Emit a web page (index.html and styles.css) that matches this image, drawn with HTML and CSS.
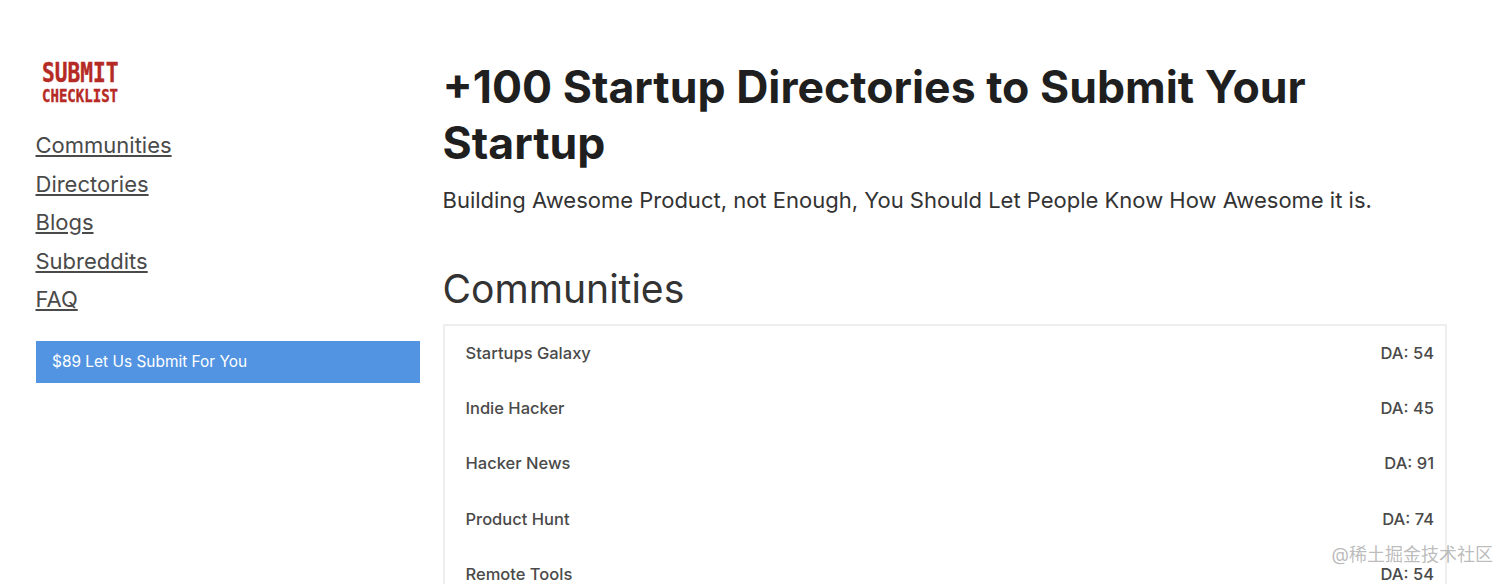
FILE: index.html
```html
<!DOCTYPE html>
<html>
<head>
<meta charset="utf-8">
<title>Submit Checklist</title>
<link rel="stylesheet" href="styles.css">
</head>
<body>

<div class="page">
<aside class="sidebar">
  <div class="logo">
    <div class="logo-top">SUBMIT</div>
    <div class="logo-bottom">CHECKLIST</div>
  </div>
  <nav class="nav">
    <a href="#communities">Communities</a>
    <a href="#directories">Directories</a>
    <a href="#blogs">Blogs</a>
    <a href="#subreddits">Subreddits</a>
    <a href="#faq">FAQ</a>
  </nav>
  <a class="cta" href="#submit">$89 Let Us Submit For You</a>
</aside>

<main class="content">
  <h1>+100 Startup Directories to Submit Your Startup</h1>
  <p class="lead">Building Awesome Product, not Enough, You Should Let People Know How Awesome it is.</p>

  <h2 id="communities">Communities</h2>
  <ul class="list">
    <li><span>Startups Galaxy</span><span>DA: 54</span></li>
    <li><span>Indie Hacker</span><span>DA: 45</span></li>
    <li><span>Hacker News</span><span>DA: 91</span></li>
    <li><span>Product Hunt</span><span>DA: 74</span></li>
    <li><span>Remote Tools</span><span>DA: 54</span></li>
  </ul>
</main>
</div>

<div class="watermark">@稀土掘金技术社区</div>

</body>
</html>
```

FILE: styles.css
```css
html, body {
    height: 100%;
    overflow: hidden;
}

body {
    margin: 0;
    background: #fff;
    color: #363636;
    font-family: Inter, "Noto Sans CJK SC", sans-serif;
}

.page {
    display: flex;
    padding: 0 65px 0 35.5px;
}

.sidebar {
    flex: 0 0 384.5px;
    padding-top: 60px;
}

.logo {
    height: 66px;
    padding-left: 6px;
    color: #b52a25;
    font-family: "DejaVu Sans Mono", monospace;
    font-weight: 700;
    -webkit-text-stroke: 0.4px #b52a25;
}

.logo-top {
    font-size: 26.5px;
    line-height: 25px;
    transform: scaleX(0.8);
    transform-origin: left center;
}

.logo-bottom {
    font-size: 18px;
    line-height: 22px;
    transform: scaleX(0.78);
    transform-origin: left center;
}

.nav {
    display: flex;
    flex-direction: column;
    align-items: flex-start;
}

.nav a {
    color: #4a4a4a;
    font-size: 22px;
    line-height: 38.6px;
    text-decoration: underline;
}

.cta {
    display: block;
    margin-top: 22px;
    padding: 0 16.5px;
    background: #5294e2;
    color: #fff;
    font-size: 15.45px;
    line-height: 42px;
    text-decoration: none;
}

.content {
    flex: 1;
    margin-left: 22.5px;
    padding-top: 59px;
}

h1 {
    margin: 0;
    color: #1f1f1f;
    font-size: 44.6px;
    font-weight: 700;
    line-height: 56px;
}

.lead {
    margin: 13px 0 0;
    color: #333;
    font-size: 22px;
    line-height: 32px;
}

h2 {
    margin: 45px 0 0;
    color: #333;
    font-size: 39.1px;
    font-weight: 400;
    line-height: 55px;
}

.list {
    margin: 8px 0 0;
    padding: 0;
    list-style: none;
    border: 2px solid #eee;
}

.list li {
    display: flex;
    justify-content: space-between;
    padding: 0 11px 0 21px;
    color: #4a4a4a;
    font-size: 16.5px;
    font-weight: 500;
    line-height: 55.2px;
}

.watermark {
    position: absolute;
    right: 19px;
    bottom: 17px;
    color: rgba(130, 130, 130, 0.55);
    font-size: 18px;
    line-height: 24px;
}
```
